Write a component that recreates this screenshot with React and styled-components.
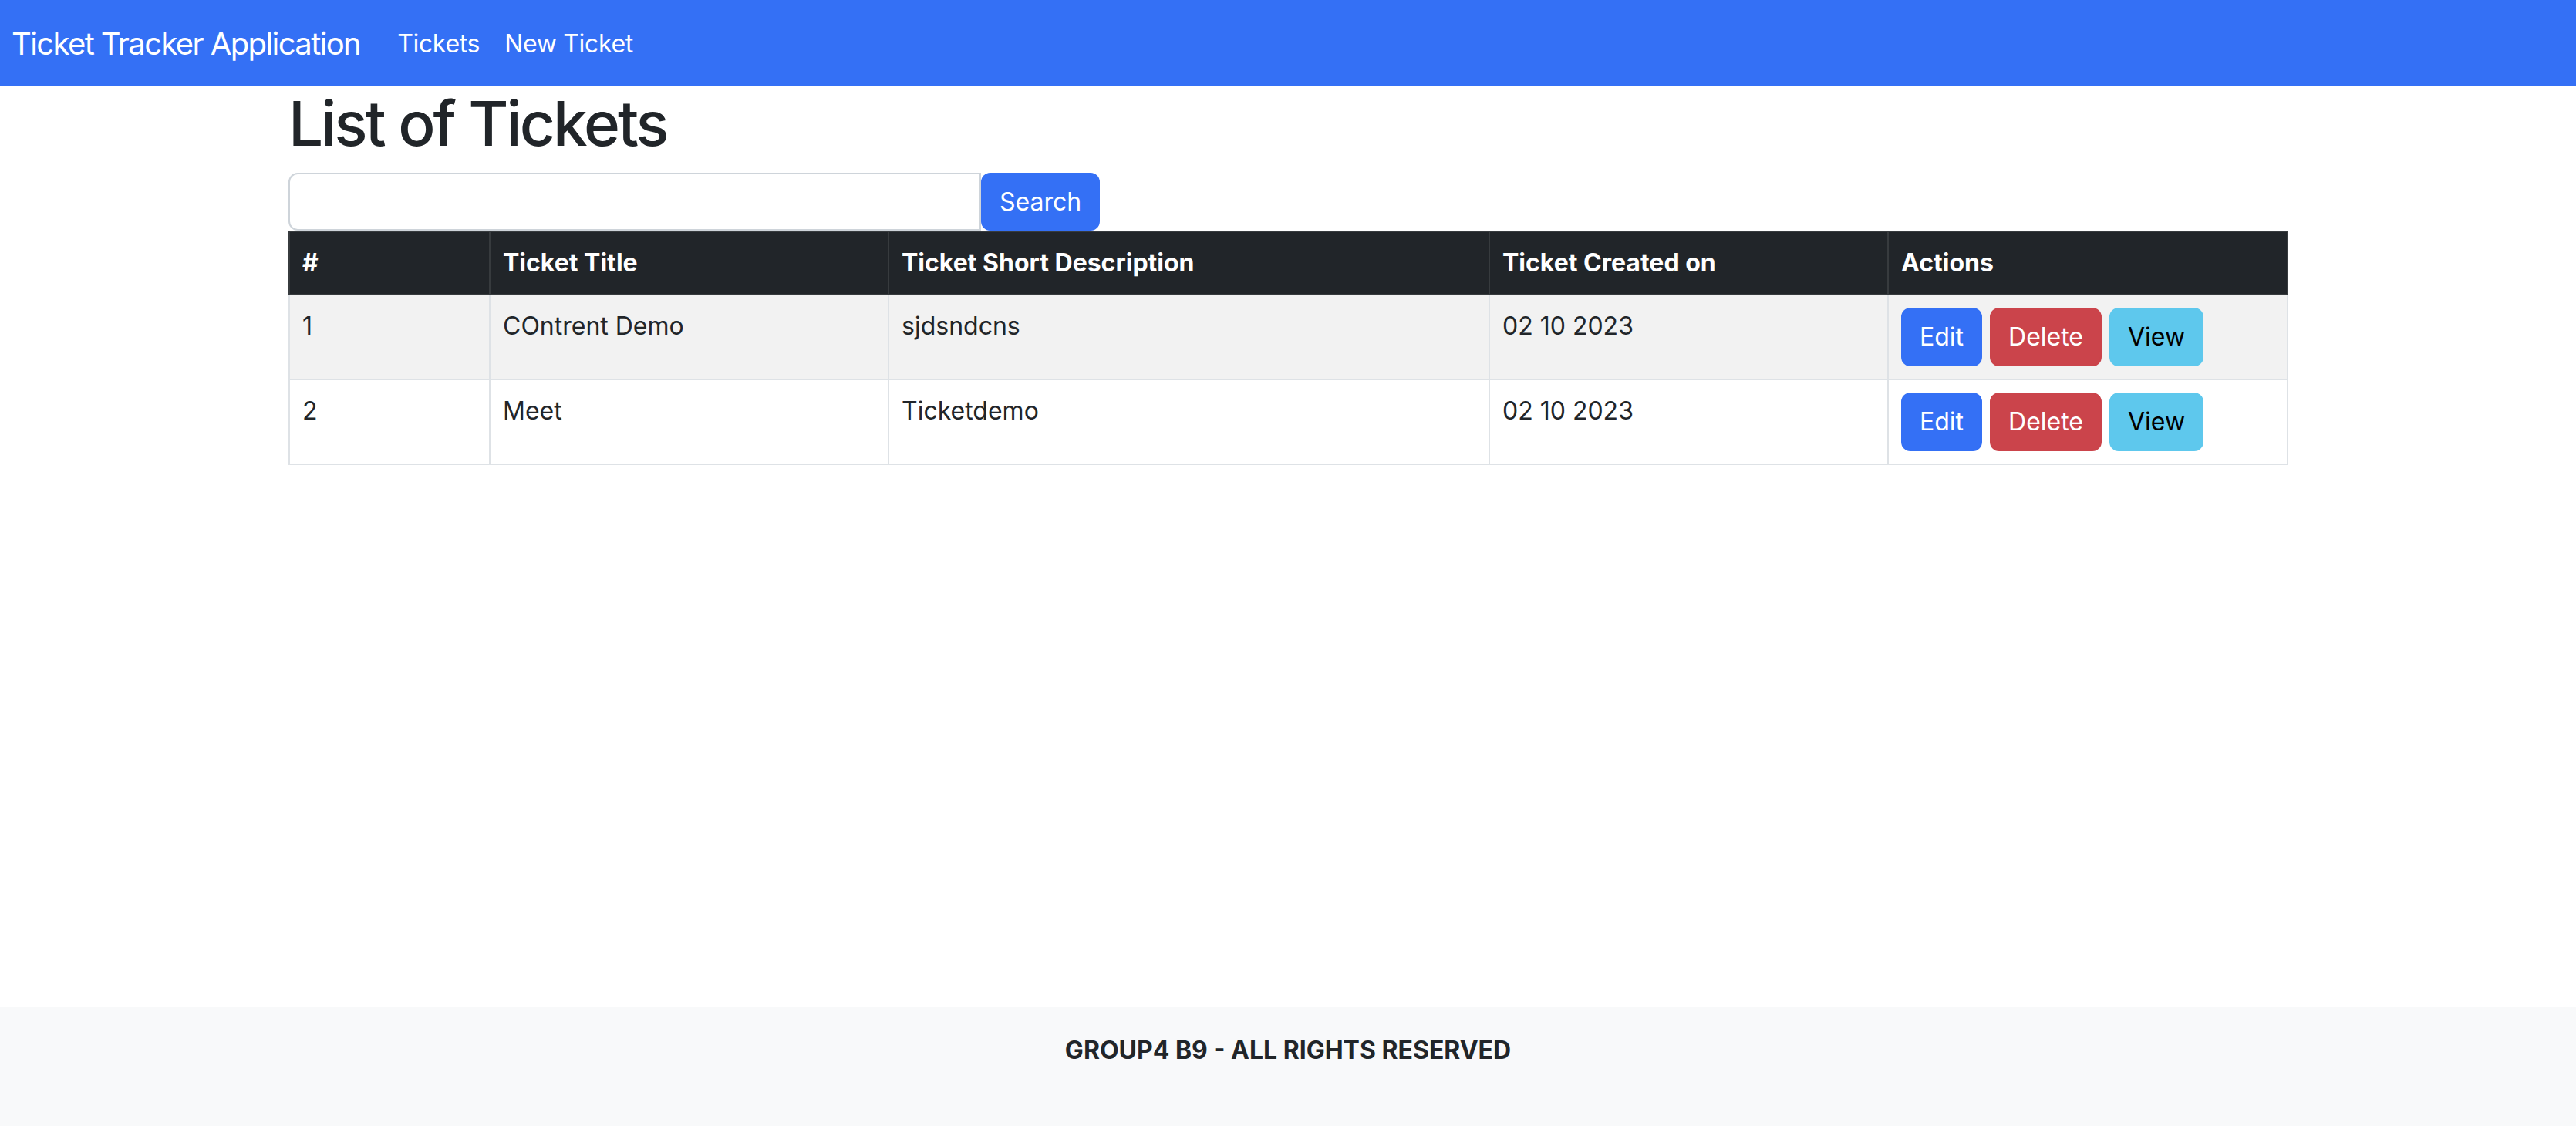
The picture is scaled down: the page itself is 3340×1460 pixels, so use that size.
import React from "react";
import styled, { createGlobalStyle } from "styled-components";

const tickets = [
  { id: 1, title: "COntrent Demo", description: "sjdsndcns", created: "02 10 2023" },
  { id: 2, title: "Meet", description: "Ticketdemo", created: "02 10 2023" },
];

const columns = [
  { label: "#", width: 260 },
  { label: "Ticket Title", width: 517 },
  { label: "Ticket Short Description", width: 779 },
  { label: "Ticket Created on", width: 517 },
  { label: "Actions", width: 518 },
];

const App = () => {
  return (
    <Page>
      <GlobalStyle />
      <NavBar>
        <Brand href="#">Ticket Tracker Application</Brand>
        <NavLink href="#">Tickets</NavLink>
        <NavLink href="#">New Ticket</NavLink>
      </NavBar>

      <Main>
        <Title>List of Tickets</Title>
        <SearchRow>
          <SearchInput type="text" />
          <SearchButton>Search</SearchButton>
        </SearchRow>

        <Table>
          <colgroup>
            {columns.map((c) => (
              <col key={c.label} style={{ width: c.width }} />
            ))}
          </colgroup>
          <thead>
            <tr>
              {columns.map((c) => (
                <Th key={c.label}>{c.label}</Th>
              ))}
            </tr>
          </thead>
          <tbody>
            {tickets.map((t, i) => (
              <Row key={t.id} $striped={i % 2 === 0}>
                <Td>{t.id}</Td>
                <Td>{t.title}</Td>
                <Td>{t.description}</Td>
                <Td>{t.created}</Td>
                <Td>
                  <Actions>
                    <ActionButton $variant="edit">Edit</ActionButton>
                    <ActionButton $variant="delete">Delete</ActionButton>
                    <ActionButton $variant="view">View</ActionButton>
                  </Actions>
                </Td>
              </Row>
            ))}
          </tbody>
        </Table>
      </Main>

      <Footer>GROUP4 B9 - ALL RIGHTS RESERVED</Footer>
    </Page>
  );
};

export default App;

const GlobalStyle = createGlobalStyle`
body {
  margin: 0;
  font-family: Inter, "Liberation Sans", Arial, sans-serif;
  color: #212529;
  background: #ffffff;
}
`;

const Page = styled.div`
min-height: 100vh;
display: flex;
flex-direction: column;
`;

const NavBar = styled.nav`
height: 112px;
background-color: #3470f5;
display: flex;
align-items: center;
padding: 0 15px;
box-sizing: border-box;
`;

const Brand = styled.a`
color: #ffffff;
font-size: 40px;
letter-spacing: -0.04em;
text-decoration: none;
margin-right: 32px;
`;

const NavLink = styled.a`
color: #ffffff;
font-size: 32px;
letter-spacing: -0.01em;
text-decoration: none;
padding: 0 16px;
`;

const Main = styled.main`
width: 2592px;
margin: 0 auto;
`;

const Title = styled.h1`
font-size: 80px;
font-weight: 500;
line-height: 1.2;
letter-spacing: -0.037em;
margin: 0 0 16px;
`;

const SearchRow = styled.div`
display: flex;
`;

const SearchInput = styled.input`
width: 898px;
height: 75px;
box-sizing: border-box;
border: 2px solid #ced4da;
border-radius: 12px 0 0 12px;
font-size: 32px;
padding: 0 24px;
outline: none;
`;

const SearchButton = styled.button`
height: 75px;
padding: 0 24px;
border: none;
border-radius: 12px;
background-color: #3470f5;
color: #ffffff;
font-family: inherit;
font-size: 32px;
cursor: pointer;
`;

const Table = styled.table`
width: 2592px;
border-collapse: collapse;
table-layout: fixed;
font-size: 32px;
line-height: 48px;
`;

const Th = styled.th`
background-color: #212529;
color: #ffffff;
font-weight: 700;
text-align: left;
padding: 16px;
border: 2px solid #373b3e;
`;

const Row = styled.tr`
background-color: ${(p) => (p.$striped ? "#f2f2f2" : "#ffffff")};
`;

const Td = styled.td`
padding: 16px;
border: 2px solid #dee2e6;
vertical-align: top;
`;

const Actions = styled.div`
display: flex;
gap: 10px;
`;

const colors = {
  edit: { bg: "#3470f5", fg: "#ffffff" },
  delete: { bg: "#cb444b", fg: "#ffffff" },
  view: { bg: "#5ec8ed", fg: "#000000" },
};

const ActionButton = styled.button`
background-color: ${(p) => colors[p.$variant].bg};
color: ${(p) => colors[p.$variant].fg};
border: 2px solid ${(p) => colors[p.$variant].bg};
border-radius: 12px;
padding: 12px 22px;
font-family: inherit;
font-size: 32px;
line-height: 48px;
cursor: pointer;
`;

const Footer = styled.footer`
margin-top: auto;
height: 154px;
box-sizing: border-box;
padding-top: 32px;
background-color: #f8f9fa;
text-align: center;
font-size: 32px;
line-height: 48px;
font-weight: 700;
`;
